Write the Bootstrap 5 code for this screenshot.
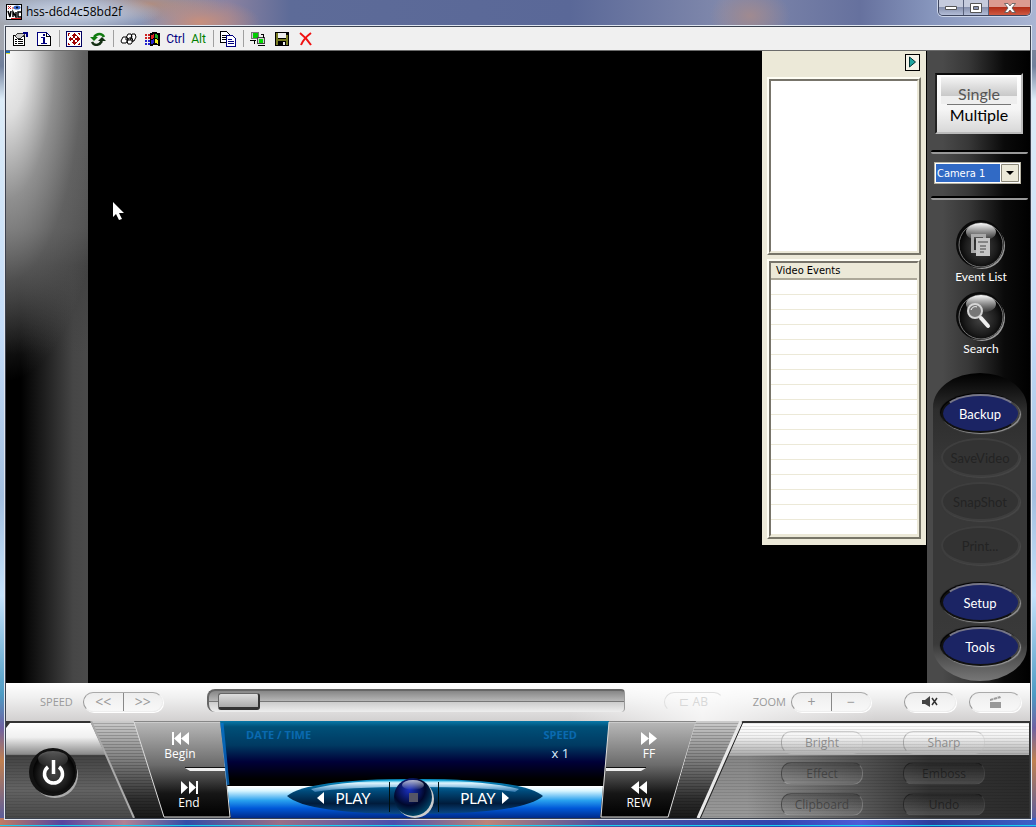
<!DOCTYPE html>
<html lang="en">
<head>
<meta charset="utf-8">
<meta name="viewport" content="width=device-width, initial-scale=1">
<title>hss-d6d4c58bd2f</title>
<link href="https://cdn.jsdelivr.net/npm/bootstrap@5.3.0/dist/css/bootstrap.min.css" rel="stylesheet">
<style>
body{font-family:"Open Sans","Noto Sans",sans-serif;font-size:12px;line-height:16px;color:#000;
 background:
 linear-gradient(#1ad0f0,#1ad0f0) 0 calc(100% - 1px)/100% 1px no-repeat,
 radial-gradient(ellipse 90px 18px at 72px 12px,#d4ddecee,#bac7de99 60%,transparent),
 radial-gradient(ellipse 60px 24px at 200px 22px,#c88f7c,transparent),
 radial-gradient(ellipse 70px 16px at 150px 4px,#b08d80,transparent),
 radial-gradient(ellipse 40px 30px at 750px 16px,#a08a90,transparent),
 linear-gradient(90deg,#a3a7b0,#8592b4 15%,#8b82a0 22%,#5d6b98 28%,#5a6898 55%,#8189ac 70%,#66719e 83%,#8796bd 90%,#a9b5d3) 0 0/100% 50px no-repeat,
 linear-gradient(90deg,#c07c63,#5544a0 6%,#b28293 12%,#334da8 18%,#9a6f86 27%,#4a4fae 38%,#bc8578 47%,#4c50a0 58%,#3045b0 75%,#4d5cd8 83%,#2c3d9c 90%,#3c61c8) 0 100%/100% 9px no-repeat,
 linear-gradient(#8c8f98,#71809c 8%,#dcecf8 12%,#c4dcf8 40%,#a3bfe0 60%,#c5e2fb 72%,#4d9bc4 84%,#6f62a2 88%,#c08050 92%,#4d58a8);}
button{font:inherit;border:0;padding:0;background:none;color:inherit}
button svg{display:block}
.titlebar{height:26px;padding-left:6px}
.winbtns{height:16px;border:1px solid #3e465f;border-top:0;border-radius:0 0 5px 5px;overflow:hidden;box-shadow:0 0 0 1px #cbd4e8;margin-right:5px}
.winbtns button{width:25px;background:linear-gradient(#c5cbdd 45%,#8791ae 50%,#b3bdd7);border-right:1px solid #59617b;display:flex;justify-content:center;align-items:center}
.winbtns .close-win{width:41px;border:0;background:linear-gradient(#dc9a90 45%,#b22d18 50%,#cf5a43)}
.frame{margin:0 5px 8px;border:1px solid #3c4250;box-shadow:0 0 0 1px #dfe6f0}
.toolbar{height:24px;background:#f0f0f0;border-bottom:1px solid #6b6b6b;padding-left:2px}
.toolbar button{width:24px;height:22px;display:flex;align-items:center;justify-content:center}
.toolbar .word{width:23px;color:#000080;font-family:Roboto,sans-serif}
.toolbar .word.alt{color:#008000}
.sep{width:6px;display:flex;justify-content:center}
.sep::before{content:"";width:1px;height:17px;background:#a0a0a0}
.strip{width:82px;position:relative;
 background:radial-gradient(ellipse 110px 330px at 0 0,#fafafa,#dedede 20%,#a0a0a0cc 45%,#7777 70%,transparent),
 linear-gradient(#505050,#4e4e4e 28%,#404040cc 34%,#4440 48%),
 linear-gradient(90deg,#000 18%,#1c1c1c 45%,#464646 82%,#4a4a4a)}
.strip::before{content:"";position:absolute;left:0;top:0;width:4px;height:3px;background:#1767c0;border-bottom:1px solid #dd3}
.pointer{position:absolute;left:24px;top:150px}
.events{width:164px;background:#ece9d8;padding:3px 5px 6px;font-family:"DejaVu Sans Condensed",sans-serif;font-size:11px;line-height:14px}
.go{width:15px;height:17px;border:1px solid #000;background:#f4f2e8;display:flex;align-items:center;justify-content:center;margin:0 1px 6px}
.sunk{border:2px solid;border-color:#fffef4 #777568 #777568 #fffef4;padding:0}
.sunk>div{border:2px solid;border-color:#77746a #ece9d8 #ece9d8 #77746a;background:#fff}
.preview{height:174px}
.grid{width:100%;border-collapse:separate;border-spacing:0}
.grid th{font-weight:400;background:#ece9d8;height:17px;padding:0 5px;border-bottom:2px solid #aca899;line-height:14px}
.grid td{height:15px;padding:0;border-bottom:1px solid #ece9d8}
.side{width:104px;border-left:1px solid #000;background:linear-gradient(90deg,#4a4a4a 15%,#383838 40%,#0a0a0a 75%,#000);color:#fff;font:12px/16px Lato,sans-serif}
.mode{width:88px;height:61px;margin:22px 0 0 8px;border:2px solid #000;border-color:#0a0a0a #bbb #bbb #222;background:linear-gradient(#fff,#f5f5f5 60%,#d8d8d8);color:#000;font-size:16px}
.mode .up{margin:2px 4px 0;padding-top:7px;height:27px;background:linear-gradient(#f4f4f4,#c8c8c8 70%,#eee 71%);color:#555;line-height:19px}
.mode .dn{margin:0 10px;border-top:1px solid #777;line-height:20px}
.groove{height:4px;margin-left:4px;border-top:2px solid #000;border-bottom:2px solid #999;border-radius:2px;margin-right:2px}
.cam{width:87px;margin:8px 0 12px 7px;position:relative}
.cam select{appearance:none;width:100%;height:22px;border:1px solid #b9b5a5;border-radius:0;padding:0 2px;outline:0;color:#fff;font:11px "DejaVu Sans Condensed",sans-serif;background:linear-gradient(90deg,#316ac5 65px,#fff 65px);box-shadow:inset 0 0 0 1px #fff;display:block}
.cam svg{position:absolute;right:2px;top:2px;pointer-events:none}
.rounds{padding-top:20px}
.round{display:flex;flex-direction:column;align-items:center;width:108px;height:72px;text-align:center}
.round span{line-height:14px}
.pod{width:94px;margin:9px 0 0 6px;border-radius:47px/34px;height:308px;background:linear-gradient(#000,#2d2d2d 12%,#383838 30% 80%,#3a3a3a 88%,#777);display:flex;flex-direction:column;align-items:center;padding:21px 0 0}
.oval{width:79px;height:39px;margin-bottom:5px;border-radius:50%;background:#1b2464;color:#fff;font-size:13px;border:2px solid #000;border-color:#778 #444 #111 #111;box-shadow:1px 1px 1px 0 #999,-1px -1px 1px #000}
.oval:disabled{background:#333;color:#232323;border-color:#3e3e3e;box-shadow:1px 1px 1px #484848}
.oval.gap-above{margin-top:13px}
.ctlbar{height:38px;background:linear-gradient(90deg,transparent 55%,#fffb 68%,transparent 85%),linear-gradient(#fff,#efefef 40%,#d2d0d0);padding-left:34px;padding-right:9px;color:#9a9a9a;font-size:11px}
.pill{height:20px;border:1px solid #999;border-color:#aaa #eee #eee #999;border-radius:11px;background:linear-gradient(#eee,#f8f8f8);display:flex;box-shadow:1px 1px 0 #fff}
.pill button,button.pill{display:flex;align-items:center;justify-content:center;color:#999}
.pill button{width:39px;font-size:14px}
.pill button+button{border-left:1px solid #888}
button.pill{width:52px}
.speedset{margin:0 44px 0 10px}
.zoomset{margin:0 33px 0 5px}
.mute{margin-right:13px}
.ctlbar .ghost{width:60px;margin:0 29px 0 39px;color:#d8d8d8;border-color:#e0e0e0 transparent transparent #e0e0e0;background:none;box-shadow:none;font-size:12px}
.seek{appearance:none;width:0;height:23px;min-width:80px;margin:0 0 4px;padding:0 9px;border-radius:8px 4px 4px 8px;border-left:2px solid #666;border-top:2px solid #666;border-right:1px solid #999;background:linear-gradient(#868686,#b5b5b5 46%,#777 47% 50%,#ccc 52%,#eee)}
.seek::-webkit-slider-thumb{appearance:none;width:42px;height:17px;border-radius:3px;border:1px solid #666;border-right:2px solid #333;border-bottom:3px solid #333;background:linear-gradient(#ddd,#aaa)}
.console{height:97px;position:relative;background:#888;color:#fff}
.console>*{position:relative}
.console .backdrop{position:absolute;inset:0;width:100%;height:100%}
.power{width:128px;padding:26px 0 0 22px}
.navcol{width:86px;padding-top:10px}
.navcol button,.ffcol button{display:flex;flex-direction:column;align-items:center;line-height:16px;height:49px;width:92px}
.navcol button+button{padding-left:18px}
.ffcol{width:81px;padding-top:10px}
.ffcol button{width:80px}
.ffcol button+button{width:60px}
.lcd{color:#0a6ab0;font-weight:700;font-size:11px;padding:6px 32px 0 26px;height:56px}
.lcd output{color:#def;font-weight:400;font-size:13px;display:block;margin-top:2px}
.playbar{width:256px;height:41px;position:relative}
.playbar .lens{position:absolute;inset:0}
.playbar button{position:relative;font:15px/16px Lato,sans-serif;display:flex;align-items:center;gap:12px;margin-left:30px}
.playbar button+button{margin:0 34px 0 0;gap:6px}
.tune{width:340px;padding:10px 7px 0 91px;column-gap:40px}
.tune .lab{width:82px;height:23px;margin-bottom:8px;border-radius:10px;border:1px solid;border-color:#7775 #bbb6 #bbb6 #7778;background:linear-gradient(#fff3,#fff0);color:#666a;line-height:20px}
.tune .low{background:linear-gradient(#0003,#fff2);color:#333a;border-color:#333a #bbb5 #bbb5 #333a}
.tune .night{color:#1119;border-color:#1118 #6664 #6664 #1118}
.holes{width:14px;height:70px;background:radial-gradient(circle at 2px 2px,#222a 1px,#ccc3 3px,transparent 3px) 0 0/8px 8px}
</style>
</head>
<body class="d-flex flex-column min-vh-100">
<header class="titlebar d-flex align-items-start">
 <svg class="mt-1" width="16" height="16" viewBox="0 0 16 16"><path d="M0 0h16v16H0z"/><path fill="#fff" d="M1 1h14v14H1z"/><path stroke="#c22" d="M2 2l3 3M5 2L2 5M6 4h2"/><ellipse cx="11" cy="3.500" rx="3.500" ry="2" fill="#36c"/><circle cx="11" cy="3.500" r="1"/><path d="M2 7l2 6 1-6M7 13V8l3 5V8M15 8h-3v5h3" fill="none" stroke="#000" stroke-width="1.500"/><path stroke="#d22" d="M5 14.500h10"/></svg>
 <span class="flex-grow-1 pt-1 ps-1">hss-d6d4c58bd2f</span>
 <div class="winbtns d-flex">
  <button aria-label="Minimize"><svg width="12" height="6"><path fill="#fff" stroke="#555" d="M.5 1.500h11v3H.5z"/></svg></button>
  <button aria-label="Maximize"><svg width="12" height="10"><path fill="#fff" stroke="#555" fill-rule="evenodd" d="M.5.5h11v9H.5zM3.500 3.500h5v3h-5z"/></svg></button>
  <button class="close-win" aria-label="Close"><svg width="12" height="10"><path fill="#fff" stroke="#555" stroke-width=".8" d="M.5.5h3.500l2 2.500 2-2.500h3.500L8 5l3.500 4.500H8L6 7 4 9.500H.5L4 5z"/></svg></button>
 </div>
</header>
<div class="frame flex-grow-1 d-flex flex-column">
 <nav class="toolbar d-flex align-items-center flex-shrink-0" aria-label="Viewer toolbar">
  <button aria-label="Options"><svg width="16" height="16" shape-rendering="crispEdges"><path fill="#fff" stroke="#000" d="M1.500 4.500h11v10h-11z"/><path stroke="#000" d="M3 8.500h2M6 8.500h5M3 10.500h2M6 10.500h5M3 12.500h2M6 12.500h5"/><path fill="#ccc" stroke="#333" d="M3 5l3-3h5l2 2-4 3H5z"/><path fill="#000080" d="M11 1h5v5h-2V3h-3z"/></svg></button>
  <button aria-label="Connection info"><svg width="14" height="16" shape-rendering="crispEdges"><path fill="#fff" stroke="#000080" d="M.5 1.500h9l4 4v9H.5z"/><path d="M9.500 1.500v4h4M13.500 6v8.500H1" fill="none" stroke="#000"/><path fill="#000080" d="M6 3h2v2H6zM4 6h4v6h2v1H4v-1h2V7H4z"/></svg></button>
  <span class="sep"></span>
  <button aria-label="Full screen"><svg width="16" height="16" shape-rendering="crispEdges"><path fill="#fff" stroke="#000060" d="M.5.500h15v15H.5z"/><path fill="#a00000" d="M8 2l3 3H9v2H7V5H5zM8 14l3-3H9V9H7v2H5zM2 8l3-3v2h2v2H5v2zM14 8l-3-3v2H9v2h2v2z"/><path stroke="#a00000" fill="none" d="M2 4.500V2.500h2M12 2.500h1.500V4M2.500 12v1.500H4M12 13.500h1.500V12"/></svg></button>
  <button aria-label="Refresh"><svg width="16" height="14"><path d="M14 5C12 1 7 1 4 5" fill="none" stroke="#107a10" stroke-width="2.500"/><path fill="#107a10" d="M0 5h8L4 9z"/><path d="M2 10c2 4 7 4 10-1" fill="none" stroke="#132e13" stroke-width="2.500"/><path fill="#132e13" d="M8 9h8l-4-4z"/></svg></button>
  <span class="sep"></span>
  <button aria-label="Send Ctrl Alt Del"><svg width="17" height="12"><g fill="#fff" stroke="#000"><path d="M6 5l2-4h3l1 3-2 3H6zM11 5l1-4h3l1 3-2 4h-3zM1 8l2-4h4l1 3-2 3H2zM7 8l2-3h3l1 3-2 3H8z"/></g></svg></button>
  <button aria-label="Send Start"><svg width="17" height="16" shape-rendering="crispEdges"><path d="M6 2l4-1 6 1v13l-4-1-6 1z"/><path fill="#d22" d="M7 4l3-1v4l-3 1z"/><path fill="#2a2" d="M11 3l3 1v4l-3-1z"/><path fill="#22c" d="M7 9l3-1v4l-3 1z"/><path fill="#ee2" d="M11 8l3 1v4l-3-1z"/><path stroke="#c22" stroke-width="2" stroke-dasharray="2 1" d="M1 4h5M1 7h5"/><path stroke="#22c" stroke-width="2" stroke-dasharray="2 1" d="M1 10h5M1 13h5"/></svg></button>
  <button class="word">Ctrl</button>
  <button class="word alt">Alt</button>
  <span class="sep"></span>
  <button aria-label="Copy"><svg width="17" height="16" shape-rendering="crispEdges"><path fill="#fff" stroke="#000" d="M.5.5h6l3 3v8h-9z"/><path stroke="#000" d="M2 4.500h4M2 6.500h5M2 8.500h5"/><path fill="#fff" stroke="#000080" d="M6.500 4.500h6l3 3v8h-9z"/><path stroke="#000080" d="M8 8.500h4M8 10.500h6M8 12.500h6"/></svg></button>
  <span class="sep"></span>
  <button aria-label="New connection"><svg width="16" height="16" shape-rendering="crispEdges"><path fill="#ccc" stroke="#777" d="M1.500 1.500h7v6h-7z"/><path fill="#0c0" d="M3 2h5v5H3z"/><path fill="#ccc" stroke="#444" d="M7.500 6.500h7v6h-7z"/><path fill="#0d0" d="M9 8h4v4H9z"/><path stroke="#000" d="M0 9.500h6M4.500 10v3M8 14.500h7M10.500 3.500h3v3" fill="none"/></svg></button>
  <button aria-label="Save"><svg width="14" height="14" shape-rendering="crispEdges"><path d="M0 0h14v14H0z"/><path fill="#777b22" d="M1 1h2v12H1zM11 3h2v10h-2zM3 7h8v2H3z"/><path fill="#eee" d="M3 1h8v5H3zM8 10h2v3H8z"/></svg></button>
  <button aria-label="Disconnect"><svg width="14" height="14"><path d="M1 1c4 3 7 6 11 12M12 1C8 4 4 8 2 13" fill="none" stroke="#f01010" stroke-width="2"/></svg></button>
 </nav>
 <main class="flex-grow-1 d-flex bg-black">
  <div class="strip"></div>
  <section class="flex-grow-1 position-relative" aria-label="Video">
   <svg class="pointer" width="12" height="20"><path fill="#fff" d="M1 1v15l3-3 3 6 3-1-3-6h5z"/></svg>
  </section>
  <aside class="events align-self-start">
   <button class="go ms-auto" aria-label="Hide panel"><svg width="9" height="13"><path fill="#1fa5a0" stroke="#033" d="M1.500 1v10L7.500 6z"/></svg></button>
   <div class="sunk"><div class="preview"></div></div>
   <div class="sunk mt-1"><div>
    <table class="grid"><thead><tr><th scope="col">Video Events</th></tr></thead>
    <tbody><tr><td></td></tr><tr><td></td></tr><tr><td></td></tr><tr><td></td></tr><tr><td></td></tr><tr><td></td></tr><tr><td></td></tr><tr><td></td></tr><tr><td></td></tr><tr><td></td></tr><tr><td></td></tr><tr><td></td></tr><tr><td></td></tr><tr><td></td></tr><tr><td></td></tr><tr><td></td></tr><tr><td></td></tr></tbody></table>
   </div></div>
  </aside>
  <aside class="side">
   <button class="mode d-flex flex-column align-items-stretch justify-content-start"><span class="up">Single</span><span class="dn">Multiple</span></button>
   <div class="groove mt-3"></div>
   <div class="cam"><select aria-label="Camera"><option>Camera 1</option></select><svg width="18" height="18"><path fill="#ece9d8" stroke="#8a8778" d="M.5.5h17v17H.5z"/><path d="M5 7h8l-4 4z"/></svg></div>
   <div class="groove"></div>
   <div class="rounds">
   <button class="round"><svg width="52" height="50" viewBox="0 0 52 50"><defs><radialGradient id="ball" cx=".5" cy=".55" r=".5"><stop offset="0" stop-color="#444"/><stop offset=".7" stop-color="#1c1c1c"/><stop offset="1" stop-color="#050505"/></radialGradient><linearGradient id="shine" x2="0" y2="1"><stop stop-color="#fff"/><stop offset="1" stop-color="#fff" stop-opacity="0"/></linearGradient></defs><circle cx="27" cy="26" r="23" fill="#999"/><circle cx="25" cy="24" r="24" fill="#0a0a0a"/><circle cx="26" cy="25" r="22" fill="url(#ball)" stroke="#777"/><ellipse cx="26" cy="12" rx="15" ry="9" fill="url(#shine)"/><path fill="#aaa" d="M16 14h15v5h-3v-2h-9v13h4v3h-7z"/><path fill="#c6c6c6" d="M21 18h14v18H21z"/><path stroke="#444" d="M23 22h10M25 26h6M25 29h6M25 32h4"/></svg><span>Event List</span></button>
   <button class="round"><svg width="52" height="50" viewBox="0 0 52 50"><circle cx="27" cy="26" r="23" fill="#999"/><circle cx="25" cy="24" r="24" fill="#0a0a0a"/><circle cx="26" cy="25" r="22" fill="url(#ball)" stroke="#777"/><ellipse cx="26" cy="12" rx="15" ry="9" fill="url(#shine)"/><circle cx="20" cy="19" r="7" fill="#777" stroke="#d5d5d5" stroke-width="2"/><path d="M16 18c1-3 4-4 6-3" fill="none" stroke="#fff"/><path stroke="#eee" stroke-width="4" stroke-linecap="round" d="M26 26l7 8"/></svg><span>Search</span></button>
   </div>
   <div class="pod">
    <button class="oval">Backup</button><button class="oval" disabled>SaveVideo</button><button class="oval" disabled>SnapShot</button><button class="oval" disabled>Print...</button><button class="oval gap-above">Setup</button><button class="oval">Tools</button>
   </div>
  </aside>
 </main>
 <section class="ctlbar d-flex align-items-center flex-shrink-0" aria-label="Speed and zoom">
  <span>SPEED</span>
  <div class="pill speedset"><button>&lt;&lt;</button><button>&gt;&gt;</button></div>
  <input class="seek flex-grow-1" type="range" min="0" max="100" value="0" aria-label="Position">
  <button class="pill ghost" aria-label="Loop AB">⊏ AB</button>
  <span>ZOOM</span>
  <div class="pill zoomset"><button aria-label="Zoom in">+</button><button aria-label="Zoom out">−</button></div>
  <button class="pill mute" aria-label="Mute"><svg width="16" height="12"><path fill="#444" d="M0 4h3l5-4v11L3 8H0z"/><path stroke="#333" stroke-width="1.500" d="M10 2l5 7M15 2l-5 7"/></svg></button>
  <button class="pill" aria-label="Clip"><svg width="13" height="13"><path fill="#999" d="M1 6h11v6H1zM1 3l10-3 1 2L1 5z"/><path stroke="#ddd" d="M4 2l1 2M8 1l1 2"/></svg></button>
 </section>
 <section class="console d-flex flex-shrink-0" aria-label="Playback">
  <svg class="backdrop" viewBox="6 721 1024 97" preserveAspectRatio="none">
   <defs>
    <linearGradient id="plateL" x2="0" y2="1"><stop stop-color="#fff"/><stop offset=".15" stop-color="#f0f0f0"/><stop offset=".33" stop-color="#8a8a8a"/><stop offset=".34" stop-color="#424242"/><stop offset=".7" stop-color="#636363"/><stop offset="1" stop-color="#484848"/></linearGradient>
    <linearGradient id="band" x2="0" y2="1"><stop stop-color="#ccc"/><stop offset=".35" stop-color="#888"/><stop offset=".8" stop-color="#2e2e2e"/><stop offset="1" stop-color="#181818"/></linearGradient>
    <linearGradient id="key" x2="0" y2="1"><stop stop-color="#b8b8b8"/><stop offset=".45" stop-color="#6c6c6c"/><stop offset=".75" stop-color="#161616"/><stop offset="1" stop-color="#000"/></linearGradient>
    <linearGradient id="lcd" x2="0" y2="1"><stop stop-color="#0878a8"/><stop offset=".06" stop-color="#005078"/><stop offset=".25" stop-color="#003a62"/><stop offset=".42" stop-color="#000038"/><stop offset=".6" stop-color="#000"/><stop offset=".67" stop-color="#000"/><stop offset=".671" stop-color="#fff"/><stop offset=".72" stop-color="#d8f6ff"/><stop offset=".82" stop-color="#28a0ee"/><stop offset=".9" stop-color="#0058d8"/><stop offset="1" stop-color="#002a88"/></linearGradient>
    <linearGradient id="plateR" x2="0" y2="1"><stop stop-color="#fff"/><stop offset=".14" stop-color="#f2f2f2"/><stop offset=".34" stop-color="#aaa"/><stop offset=".35" stop-color="#858585"/><stop offset="1" stop-color="#999"/></linearGradient>
    <linearGradient id="dusk"><stop offset=".15" stop-color="#222" stop-opacity="0"/><stop offset=".7" stop-color="#222" stop-opacity=".85"/><stop offset="1" stop-color="#222" stop-opacity=".92"/></linearGradient>
    <pattern id="lines" width="8" height="3" patternUnits="userSpaceOnUse"><path fill="#000" fill-opacity=".18" d="M0 0h8v1H0z"/></pattern>
   </defs>
   <path fill="#333" d="M6 721h1024v97H6z"/>
   <path fill="url(#plateL)" d="M10 723h81l43 95H6v-90z"/><path fill="url(#lines)" fill-opacity=".5" d="M6 755h99l29 63H6z"/>
   <path fill="url(#band)" d="M91 721h43l30 97h-29z"/><path fill="url(#lines)" d="M91 721h43l30 97h-29z"/>
   <path d="M91 721l43 97" stroke="#aaa" stroke-width="2"/>
   <path fill="url(#key)" stroke="#ddd" d="M134 722h87l9 95h-66z"/>
   <path fill="#eee" d="M185 768l45-1v4h-40z"/><path stroke="#111" d="M185 767.500h43"/>
   <path fill="url(#lcd)" d="M220 721h389l-9 97H231z"/><path stroke="#0a78d8" stroke-width="3" d="M222 723l6 62" opacity=".7"/>
   <path fill="url(#key)" stroke="#ddd" d="M609 722h87l-28 95h-67z"/>
   <path fill="#eee" d="M606 768h40l-5 3h-35z"/><path stroke="#111" d="M606 767.500h40"/>
   <path fill="url(#band)" d="M696 721h45l-44 97h-28z"/><path fill="url(#lines)" d="M696 721h45l-44 97h-28z"/>
   <path fill="url(#plateR)" d="M741 723h288v95H697z"/><path fill="url(#dusk)" d="M727 755h302v63H697z"/><path fill="url(#lines)" fill-opacity=".5" d="M741 723h288v95H697z"/>
   <path d="M741 721l-43 97" stroke="#e8e8e8" stroke-width="3"/><path d="M743 722l-43 97" stroke="#222"/>
  </svg>
  <div class="power"><button aria-label="Power"><svg width="52" height="52" viewBox="0 0 52 52"><circle cx="27" cy="28" r="23" fill="#aaa"/><circle cx="25" cy="25" r="24" fill="#111"/><circle cx="26" cy="25" r="21" fill="url(#ball)"/><ellipse cx="25" cy="12" rx="15" ry="8" fill="url(#shine)" opacity=".35"/><path d="M20 20a9 9 0 1 0 11 0" fill="none" stroke="#fff" stroke-width="3.500"/><path stroke="#fff" stroke-width="3.500" d="M25.500 13v14"/></svg></button></div>
  <div class="navcol">
   <button><svg width="17" height="15"><path fill="#fff" d="M0 1h2v13H0zM9 1v13L2 7.500zM17 1v13L9 7.500z"/></svg>Begin</button>
   <button><svg width="17" height="15"><path fill="#fff" d="M15 1h2v13h-2zM0 1v13l7-6.500zM8 1v13l7-6.500z"/></svg>End</button>
  </div>
  <div class="flex-grow-1 d-flex flex-column align-items-center">
   <div class="lcd w-100 d-flex justify-content-between"><span>DATE / TIME</span><div class="text-center">SPEED<output>x 1</output></div></div>
   <div class="playbar d-flex justify-content-between align-items-center">
    <svg class="lens" width="256" height="41" viewBox="0 0 256 41"><defs><linearGradient id="lens" x2="0" y2="1"><stop stop-color="#0aa8d8"/><stop offset=".25" stop-color="#e0f6ff"/><stop offset=".6" stop-color="#8cc0e0"/><stop offset="1" stop-color="#2a70a8"/></linearGradient><linearGradient id="hull" x2="0" y2="1"><stop stop-color="#0a98d0"/><stop offset=".35" stop-color="#004a7a"/><stop offset=".7" stop-color="#001c3c"/><stop offset="1" stop-color="#0a4a88"/></linearGradient><radialGradient id="orb" cx=".4" cy=".3" r=".7"><stop stop-color="#1a30c0"/><stop offset=".6" stop-color="#00082c"/><stop offset="1" stop-color="#046"/></radialGradient></defs>
     <path fill="url(#hull)" d="M0 19Q20 2 128 2t128 17q-20 18-128 18T0 19z"/><path fill="url(#lens)" d="M24 12Q60 3 128 3t104 9l-4 3Q200 10 128 10T28 15z"/>
     <path stroke="#011" d="M102.500 5v30M151.500 5v30"/><circle cx="128" cy="22" r="19" fill="#ccc"/><circle cx="126" cy="20" r="19" fill="url(#orb)"/><ellipse cx="126" cy="8" rx="11" ry="5" fill="url(#shine)" opacity=".7"/><path fill="#556" d="M122 16h9v9h-9z"/></svg>
    <button><svg width="7" height="12"><path fill="#fff" d="M7 0v12L0 6z"/></svg>PLAY</button>
    <button>PLAY<svg width="7" height="12"><path fill="#fff" d="M0 0v12l7-6z"/></svg></button>
   </div>
  </div>
  <div class="ffcol">
   <button><svg width="16" height="15"><path fill="#fff" d="M0 1v13l8-6.500zM8 1v13l8-6.500z"/></svg>FF</button>
   <button><svg width="16" height="15"><path fill="#fff" d="M8 1v13L0 7.500zM16 1v13L8 7.500z"/></svg>REW</button>
  </div>
  <div class="tune d-flex">
   <div><button class="lab d-block">Bright</button><button class="lab low d-block">Effect</button><button class="lab low d-block">Clipboard</button></div>
   <div><button class="lab d-block">Sharp</button><button class="lab low night d-block">Emboss</button><button class="lab low night d-block">Undo</button></div>
   <div class="holes mt-3 ms-auto"></div>
  </div>
 </section>
</div>
<script src="https://cdn.jsdelivr.net/npm/bootstrap@5.3.0/dist/js/bootstrap.bundle.min.js"></script>
</body>
</html>
